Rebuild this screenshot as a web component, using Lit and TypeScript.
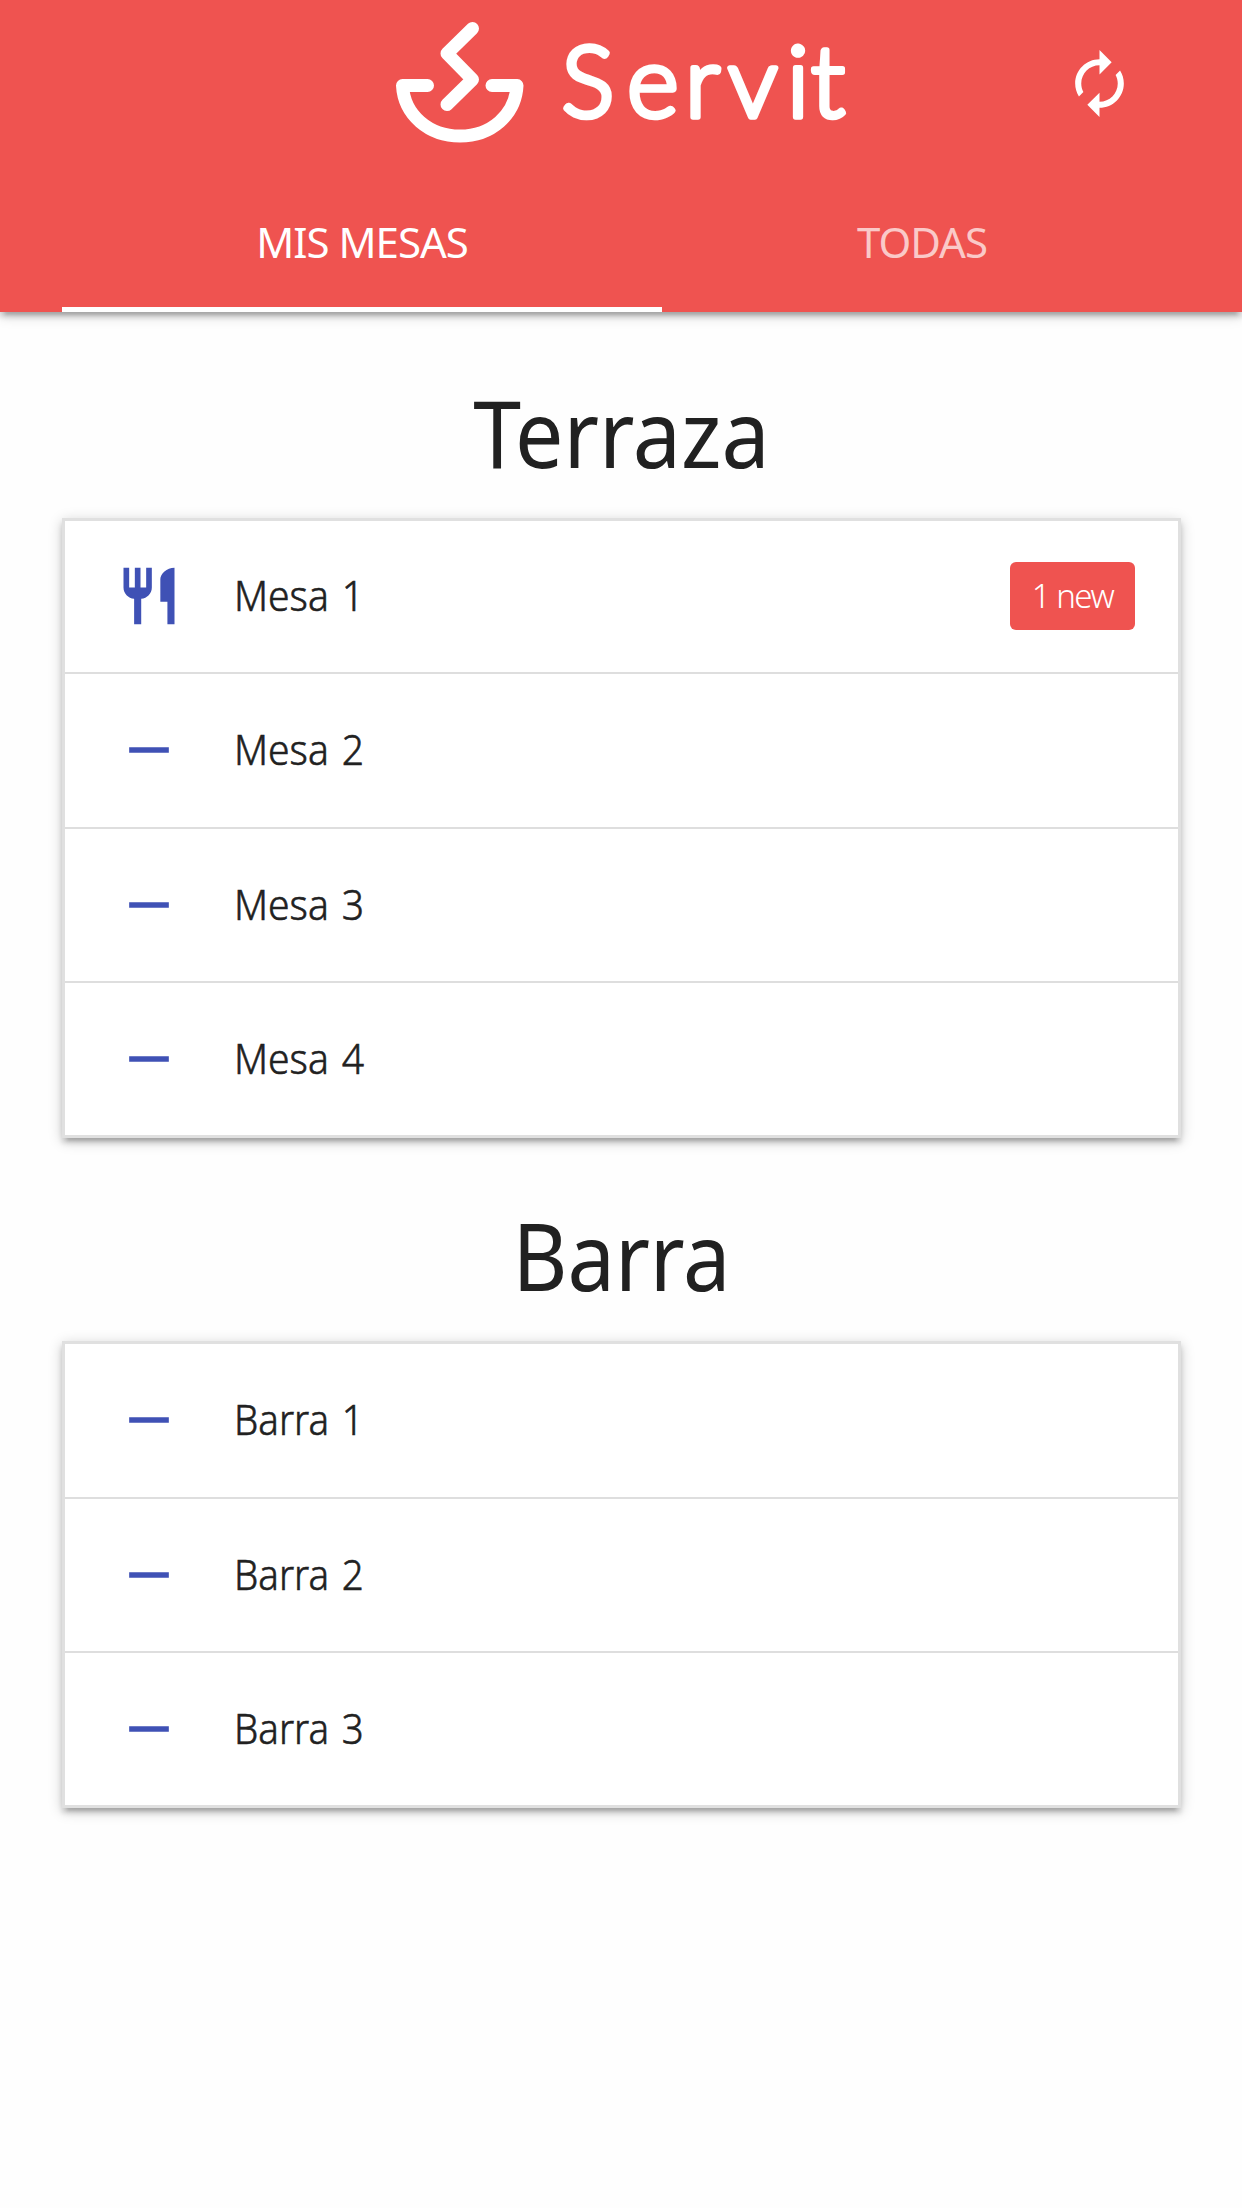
import { LitElement, html, svg, css, nothing } from "lit";
import { customElement, property } from "lit/decorators.js";

interface Table {
  name: string;
  news?: number;
}

interface Section {
  title: string;
  cls: string;
  tables: Table[];
}

const SECTIONS: Section[] = [
  {
    title: "Terraza",
    cls: "terraza",
    tables: [{ name: "Mesa 1", news: 1 }, { name: "Mesa 2" }, { name: "Mesa 3" }, { name: "Mesa 4" }],
  },
  {
    title: "Barra",
    cls: "barra",
    tables: [{ name: "Barra 1" }, { name: "Barra 2" }, { name: "Barra 3" }],
  },
];

@customElement("table-list")
export class TableList extends LitElement {
  @property({ attribute: false }) tables: Table[] = [];

  static styles = css`
    :host {
      display: block;
    }
    .card {
      box-sizing: border-box;
      border: 3px solid #e0e0e0;
      box-shadow: 0 5px 5px 0 rgba(0, 0, 0, 0.14), 0 8px 3px -5px rgba(0, 0, 0, 0.12), 0 3px 13px 0 rgba(0, 0, 0, 0.2);
    }
    .row {
      box-sizing: border-box;
      height: var(--row, 154px);
      display: flex;
      align-items: center;
      padding: 0 43px 0 50px;
      background: #fff;
      border-bottom: 2px solid #dedede;
    }
    .row:first-child {
      height: var(--first-row, 154px);
      padding-bottom: 1px;
    }
    .row:last-child {
      border-bottom: 0;
      height: 152px;
    }
    .icon {
      width: 68px;
      height: 68px;
      fill: #3f51b5;
      flex: none;
    }
    .name {
      margin-left: 51px;
      flex: 1;
      font-size: 42px;
      font-weight: 300;
      -webkit-text-stroke: 0.6px #212121;
      line-height: 60px;
      padding-bottom: 2px;
      transform: scaleX(var(--squeeze, 0.93));
      transform-origin: left;
      word-spacing: 3px;
    }
    .badge {
      box-sizing: border-box;
      width: 125px;
      height: 68px;
      border-radius: 6px;
      background: #ef5350;
      color: #fff;
      font-size: 33px;
      font-weight: 300;
      line-height: 67px;
      text-align: center;
      letter-spacing: -1.5px;
    }
  `;

  render() {
    return html`<div class="card">
      ${this.tables.map(
        (t) => html`<div class="row">
          <svg class="icon" viewBox="0 0 24 24">
            ${t.news
              ? svg`<path d="M11 9H9V2H7v7H5V2H3v7c0 2.120 1.660 3.840 3.750 3.970V22h2.500v-9.030C11.340 12.840 13 11.120 13 9V2h-2v7zm5-3v8h2.500v8H21V2c-2.760 0-5 2.240-5 4z" />`
              : svg`<path d="M19 13H5v-2h14v2z" />`}
          </svg>
          <span class="name">${t.name}</span>
          ${t.news ? html`<span class="badge">${t.news} new</span>` : nothing}
        </div>`,
      )}
    </div>`;
  }
}

@customElement("app-root")
export class AppRoot extends LitElement {
  static styles = css`
    :host {
      display: block;
      min-height: 2208px;
      background: #fefefe;
      color: #212121;
      font-family: "Noto Sans", "Open Sans", sans-serif;
    }
    .header {
      box-sizing: border-box;
      height: 312px;
      background: #ef5350;
      color: #fff;
      display: flex;
      flex-direction: column;
      box-shadow: 0 5px 5px 0 rgba(0, 0, 0, 0.14), 0 8px 3px -5px rgba(0, 0, 0, 0.12), 0 3px 13px 0 rgba(0, 0, 0, 0.2);
    }
    .bar {
      height: 172px;
      display: grid;
      grid-template-columns: 380px 480px 1fr;
    }
    .logo {
      grid-column: 2;
      width: 480px;
      height: 160px;
      fill: none;
      stroke: #fff;
    }
    .word {
      fill: #fff;
      stroke-width: 5.500px;
      stroke-linejoin: round;
      font-family: Lato, sans-serif;
      font-weight: 300;
      font-size: 99px;
    }
    .sync {
      width: 73px;
      height: 73px;
      margin: 47px 0 0 203px;
      fill: #fff;
    }
    .tabs {
      flex: 1;
      display: grid;
      grid-template-columns: 600px 520px;
      padding-left: 62px;
    }
    .tab {
      box-sizing: border-box;
      height: 140px;
      text-align: center;
      font-size: 42px;
      line-height: 139px;
      letter-spacing: -1px;
      color: rgba(255, 255, 255, 0.7);
    }
    .active {
      color: #fff;
      border-bottom: 5px solid #fff;
    }
    .section {
      padding: 0 61px 0 62px;
    }
    .terraza {
      --first-row: 153px;
      --row: 154.500px;
    }
    .barra {
      --first-row: 155px;
      --squeeze: 0.915;
    }
    .title {
      margin: 0;
      text-align: center;
      font-size: 94px;
      font-weight: 400;
      line-height: 240px;
      height: 206px;
      transform: scaleX(0.915);
    }
    .barra .title {
      line-height: 234px;
      height: 203px;
      transform: scaleX(0.9);
    }
  `;

  render() {
    return html`
      <header class="header">
        <div class="bar">
          <svg class="logo" viewBox="0 0 480 160">
            <g stroke-width="13" stroke-linecap="round" stroke-linejoin="round">
              <path d="M92.500 28.500L67 53.500L92.500 79.500L67 104.500" />
              <path d="M47.500 85.500H22.500C24 115 49 136 80 136S135.500 115 137 85.500H112" />
            </g>
            <text class="word" y="117" x="181.500 247 305 348 407 431">Servit</text>
          </svg>
          <svg class="sync" viewBox="0 0 24 24">
            <path d="M12 6v3l4-4-4-4v3c-4.420 0-8 3.580-8 8 0 1.570.460 3.030 1.240 4.260L6.700 14.800c-.450-.830-.700-1.790-.700-2.800 0-3.310 2.690-6 6-6zm6.760 1.740L17.300 9.200c.440.840.700 1.790.700 2.800 0 3.310-2.690 6-6 6v-3l-4 4 4 4v-3c4.420 0 8-3.580 8-8 0-1.570-.460-3.030-1.240-4.260z" />
          </svg>
        </div>
        <nav class="tabs">
          <div class="tab active">MIS MESAS</div>
          <div class="tab">TODAS</div>
        </nav>
      </header>
      ${SECTIONS.map(
        (s) => html`<section class="section ${s.cls}">
          <h2 class="title">${s.title}</h2>
          <table-list .tables=${s.tables}></table-list>
        </section>`,
      )}
    `;
  }
}
